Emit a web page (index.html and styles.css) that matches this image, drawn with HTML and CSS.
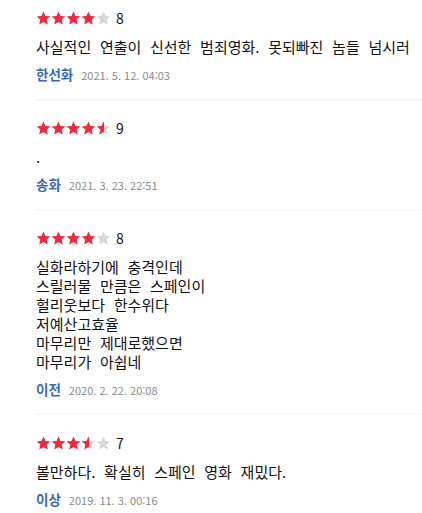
FILE: index.html
```html
<!DOCTYPE html>
<html lang="ko">
<head>
<meta charset="utf-8">
<link rel="stylesheet" href="styles.css">
</head>
<body>
<svg width="0" height="0" class="defs">
  <defs>
    <symbol id="star" viewBox="0 0 15 14">
      <polygon points="7.5,0.4 9.44,4.93 14.35,5.38 10.64,8.62 11.73,13.42 7.5,10.9 3.27,13.42 4.36,8.62 0.65,5.38 5.56,4.93"/>
    </symbol>
    <symbol id="stars" viewBox="0 0 75 14">
      <use href="#star" x="0" y="0" width="15" height="14"/>
      <use href="#star" x="15" y="0" width="15" height="14"/>
      <use href="#star" x="30" y="0" width="15" height="14"/>
      <use href="#star" x="45" y="0" width="15" height="14"/>
      <use href="#star" x="60" y="0" width="15" height="14"/>
    </symbol>
  </defs>
</svg>
<ul class="reviews">
  <li class="review">
    <div class="rating">
      <span class="stars">
        <svg class="stars-bg" width="75" height="14"><use href="#stars"/></svg>
        <span class="stars-fill" style="width:80%"><svg width="75" height="14"><use href="#stars"/></svg></span>
      </span>
      <span class="score">8</span>
    </div>
    <p class="text">사실적인 연출이 신선한 범죄영화. 못되빠진 놈들 넘시러</p>
    <div class="meta"><span class="name">한선화</span><span class="date">2021. 5. 12. 04:03</span></div>
  </li>
  <li class="review">
    <div class="rating">
      <span class="stars">
        <svg class="stars-bg" width="75" height="14"><use href="#stars"/></svg>
        <span class="stars-fill" style="width:90%"><svg width="75" height="14"><use href="#stars"/></svg></span>
      </span>
      <span class="score">9</span>
    </div>
    <p class="text">.</p>
    <div class="meta"><span class="name">송화</span><span class="date">2021. 3. 23. 22:51</span></div>
  </li>
  <li class="review">
    <div class="rating">
      <span class="stars">
        <svg class="stars-bg" width="75" height="14"><use href="#stars"/></svg>
        <span class="stars-fill" style="width:80%"><svg width="75" height="14"><use href="#stars"/></svg></span>
      </span>
      <span class="score">8</span>
    </div>
    <p class="text">실화라하기에 충격인데<br>스릴러물 만큼은 스페인이<br>헐리웃보다 한수위다<br>저예산고효율<br>마무리만 제대로했으면<br>마무리가 아쉽네</p>
    <div class="meta"><span class="name">이전</span><span class="date">2020. 2. 22. 20:08</span></div>
  </li>
  <li class="review">
    <div class="rating">
      <span class="stars">
        <svg class="stars-bg" width="75" height="14"><use href="#stars"/></svg>
        <span class="stars-fill" style="width:70%"><svg width="75" height="14"><use href="#stars"/></svg></span>
      </span>
      <span class="score">7</span>
    </div>
    <p class="text">볼만하다. 확실히 스페인 영화 재밌다.</p>
    <div class="meta"><span class="name">이상</span><span class="date">2019. 11. 3. 00:16</span></div>
  </li>
</ul>
</body>
</html>
```
FILE: styles.css
```css
html, body {
  margin: 0;
  padding: 0;
  background: #fff;
}
body {
  font-family: "Noto Sans CJK KR", "Noto Sans", sans-serif;
  color: #111;
  overflow: hidden;
}
.defs {
  position: absolute;
  width: 0;
  height: 0;
}
.reviews {
  list-style: none;
  margin: 0;
  padding: 0 0 0 36px;
}
.review {
  padding: 21px 0 15px;
  border-bottom: 1px solid #f0f0f0;
}
.review:first-child {
  padding-top: 11px;
}
.rating {
  display: flex;
  align-items: center;
  height: 14px;
}
.stars {
  position: relative;
  display: block;
  width: 75px;
  height: 14px;
}
.stars svg {
  display: block;
}
.stars-bg {
  fill: #d6d6d6;
}
.stars-fill {
  position: absolute;
  left: 0;
  top: 0;
  height: 14px;
  overflow: hidden;
  fill: #ee2a3c;
}
.score {
  margin-left: 5px;
  font-size: 14px;
  line-height: 14px;
  color: #111;
}
.text {
  margin: 12px 0 0;
  font-size: 15px;
  line-height: 19px;
  word-spacing: 4.5px;
  white-space: nowrap;
}
.meta {
  display: flex;
  align-items: baseline;
  margin-top: 9px;
  height: 19px;
  line-height: 19px;
}
.name {
  font-size: 13.5px;
  font-weight: bold;
  color: #3b68b5;
}
.date {
  margin-left: 8px;
  font-size: 11px;
  color: #8a8a8a;
}
```
